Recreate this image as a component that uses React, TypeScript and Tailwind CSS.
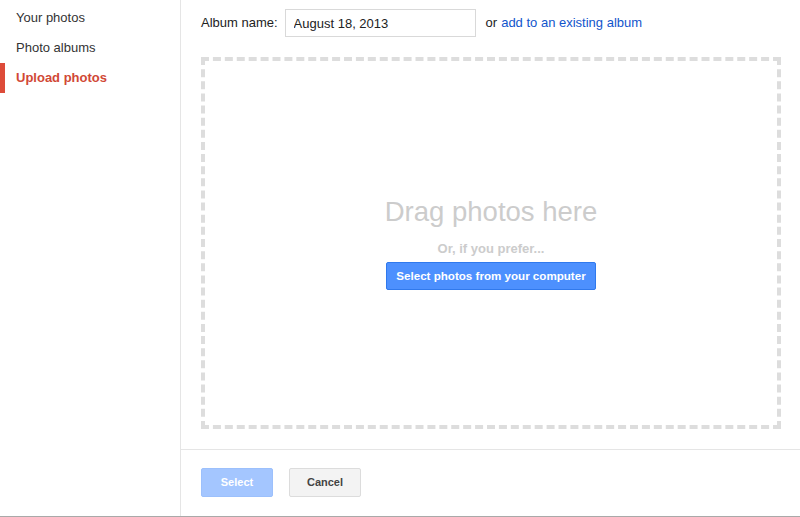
import React from 'react';

const navItems = [
  { label: 'Your photos', active: false },
  { label: 'Photo albums', active: false },
  { label: 'Upload photos', active: true },
];

export default function App() {
  return (
    <div className="flex h-[517px] w-[800px] border-b border-[#a9a9a9] bg-white font-['Liberation_Sans',Arial,sans-serif] text-[13px] text-[#222]">
      {/* Sidebar */}
      <div className="w-[181px] shrink-0 border-r border-[#e5e5e5] pt-[3px]">
        {navItems.map((item) => (
          <div
            key={item.label}
            className={`flex h-[30px] items-center border-l-[5px] pl-[11px] ${
              item.active
                ? 'border-[#dd4b39] font-bold text-[#d14836]'
                : 'border-transparent text-[#333]'
            }`}
          >
            {item.label}
          </div>
        ))}
      </div>

      {/* Main */}
      <div className="flex flex-1 flex-col">
        <div className="flex flex-col pl-[20px] pr-[19px]">
          <div className="mt-[9px] flex h-[28px] items-center">
            <span className="mr-[7px]">Album name:</span>
            <input
              className="h-[28px] w-[191px] border border-[#d9d9d9] px-[8px] text-[13px] text-[#222] outline-none"
              defaultValue="August 18, 2013"
            />
            <span className="ml-[10px]">or</span>
            <a className="ml-[4px] cursor-pointer text-[#15c]">add to an existing album</a>
          </div>

          <div className="mt-[20px] flex h-[372px] flex-col items-center justify-center border-4 border-dashed border-[#dddddd]">
            <div className="text-[27.5px] leading-[30px] text-[#cccccc]">Drag photos here</div>
            <div className="mt-[14px] text-[13px] font-bold leading-[16px] text-[#cccccc]">Or, if you prefer...</div>
            <button className="mt-[5px] h-[28px] rounded-[2px] border border-[#3079ed] bg-[#4d90fe] px-[9px] text-[11.6px] font-bold text-white">
              Select photos from your computer
            </button>
          </div>
        </div>

        <div className="mt-[20px] flex gap-[16px] border-t border-[#e5e5e5] pl-[20px] pt-[18px]">
          <button className="h-[29px] w-[72px] rounded-[2px] border border-[#9cc0fc] bg-[#a4c6ff] text-[11px] font-bold text-white">
            Select
          </button>
          <button className="h-[29px] w-[72px] rounded-[2px] border border-[#dcdcdc] bg-[#f3f3f3] text-[11px] font-bold text-[#444]">
            Cancel
          </button>
        </div>
      </div>
    </div>
  );
}
